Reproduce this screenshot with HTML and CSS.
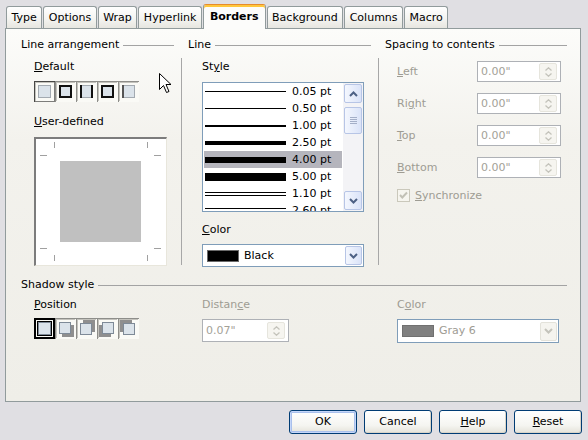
FILE: index.html
```html
<!DOCTYPE html>
<html>
<head>
<meta charset="utf-8">
<link rel="stylesheet" href="styles.css">
</head>
<body>
<div class="tabs">
  <div class="tab">Type</div>
  <div class="tab">Options</div>
  <div class="tab">Wrap</div>
  <div class="tab">Hyperlink</div>
  <div class="tab active">Borders</div>
  <div class="tab">Background</div>
  <div class="tab">Columns</div>
  <div class="tab">Macro</div>
</div>

<div class="panel">
  <div class="top">
    <section class="group arr">
      <div class="legend">Line arrangement</div>
      <div class="body">
        <div class="label"><u>D</u>efault</div>
        <div class="presets">
          <svg width="21" height="21" viewBox="0 0 21 21"><rect width="21" height="21" fill="#fafaf6"/><path d="M0 0H21V1H1V21H0Z" fill="#8e8e8a"/><path d="M1 1H20V2H2V20H1Z" fill="#c4c3bd"/><rect x="4" y="4" width="13" height="13" fill="#dbe3ea"/><rect x="4.5" y="4.5" width="12" height="12" fill="none" stroke="#a3aab1"/><rect x="0.5" y="0.5" width="20" height="20" fill="none" stroke="#000" stroke-dasharray="1 1"/></svg>
          <svg width="21" height="21" viewBox="0 0 21 21"><rect width="21" height="21" fill="#fafaf6"/><path d="M0 0H21V1H1V21H0Z" fill="#8e8e8a"/><path d="M1 1H20V2H2V20H1Z" fill="#c4c3bd"/><rect x="4" y="4" width="13" height="13" fill="#dbe3ea"/><rect x="5" y="5" width="11" height="11" fill="none" stroke="#111" stroke-width="2"/></svg>
          <svg width="21" height="21" viewBox="0 0 21 21"><rect width="21" height="21" fill="#fafaf6"/><path d="M0 0H21V1H1V21H0Z" fill="#8e8e8a"/><path d="M1 1H20V2H2V20H1Z" fill="#c4c3bd"/><rect x="4" y="4" width="13" height="13" fill="#dbe3ea"/><rect x="4.5" y="4.5" width="12" height="12" fill="none" stroke="#a3aab1"/><rect x="4" y="4" width="2" height="13" fill="#111"/><rect x="15" y="4" width="2" height="13" fill="#111"/></svg>
          <svg width="21" height="21" viewBox="0 0 21 21"><rect width="21" height="21" fill="#fafaf6"/><path d="M0 0H21V1H1V21H0Z" fill="#8e8e8a"/><path d="M1 1H20V2H2V20H1Z" fill="#c4c3bd"/><rect x="4" y="4" width="13" height="13" fill="#dbe3ea"/><rect x="5" y="5" width="11" height="11" fill="none" stroke="#111" stroke-width="2"/></svg>
          <svg width="21" height="21" viewBox="0 0 21 21"><rect width="21" height="21" fill="#fafaf6"/><path d="M0 0H21V1H1V21H0Z" fill="#8e8e8a"/><path d="M1 1H20V2H2V20H1Z" fill="#c4c3bd"/><rect x="4" y="4" width="13" height="13" fill="#dbe3ea"/><rect x="4.5" y="4.5" width="12" height="12" fill="none" stroke="#a3aab1"/><rect x="4" y="4" width="2" height="13" fill="#555"/></svg>
        </div>
        <div class="label ud"><u>U</u>ser-defined</div>
        <div class="preview">
          <svg width="131" height="126" viewBox="0 0 131 126">
            <rect x="24" y="22" width="81" height="81" fill="#c0c0c0"/>
            <g stroke="#a0a0a0" stroke-width="1">
              <path d="M18.5 3V9M111.5 3V9M18.5 116V122M111.5 116V122"/>
              <path d="M4 16.5H11M118 16.5H125M4 109.5H11M118 109.5H125"/>
            </g>
          </svg>
        </div>
      </div>
    </section>

    <section class="group line">
      <div class="legend">Line</div>
      <div class="body sep">
        <div class="label">St<u>y</u>le</div>
        <div class="listbox">
          <div class="items">
            <div class="item"><span class="sample w1"></span><span>0.05 pt</span></div>
            <div class="item"><span class="sample w1"></span><span>0.50 pt</span></div>
            <div class="item"><span class="sample w2"></span><span>1.00 pt</span></div>
            <div class="item"><span class="sample w4"></span><span>2.50 pt</span></div>
            <div class="item sel"><span class="sample w6"></span><span>4.00 pt</span></div>
            <div class="item"><span class="sample w8"></span><span>5.00 pt</span></div>
            <div class="item"><span class="sample d1"></span><span>1.10 pt</span></div>
            <div class="item"><span class="sample d2"></span><span>2.60 pt</span></div>
          </div>
          <div class="vscroll">
            <div class="sbtn"><svg width="9" height="6" viewBox="0 0 9 6"><path d="M1 5L4.5 1.5L8 5" fill="none" stroke="#4d6185" stroke-width="2"/></svg></div>
            <div class="sbtn thumb"><svg width="7" height="7" viewBox="0 0 7 7"><path d="M0 0.5H7M0 2.5H7M0 4.5H7M0 6.5H7" stroke="#a4afc8"/></svg></div>
            <div class="sbtn down"><svg width="9" height="6" viewBox="0 0 9 6"><path d="M1 1L4.5 4.5L8 1" fill="none" stroke="#4d6185" stroke-width="2"/></svg></div>
          </div>
        </div>
        <div class="label gap"><u>C</u>olor</div>
        <div class="dropdown">
          <span class="swatch black"></span>
          <span>Black</span>
          <span class="ddbtn"><svg width="9" height="6" viewBox="0 0 9 6"><path d="M1 1L4.5 4.5L8 1" fill="none" stroke="#4d6185" stroke-width="2"/></svg></span>
        </div>
      </div>
    </section>

    <section class="group spacing">
      <div class="legend">Spacing to contents</div>
      <div class="body sep">
        <div class="spin-row"><span class="dim"><u>L</u>eft</span><div class="spin"><span>0.00"</span><span class="spinbtn"><svg width="7" height="4" viewBox="0 0 7 4"><path d="M0.5 3.5L3.5 0.8L6.5 3.5" fill="none" stroke="#c4c3bb" stroke-width="1.3"/></svg><svg width="7" height="4" viewBox="0 0 7 4"><path d="M0.5 0.5L3.5 3.2L6.5 0.5" fill="none" stroke="#c4c3bb" stroke-width="1.3"/></svg></span></div></div>
        <div class="spin-row"><span class="dim">Ri<u>g</u>ht</span><div class="spin"><span>0.00"</span><span class="spinbtn"><svg width="7" height="4" viewBox="0 0 7 4"><path d="M0.5 3.5L3.5 0.8L6.5 3.5" fill="none" stroke="#c4c3bb" stroke-width="1.3"/></svg><svg width="7" height="4" viewBox="0 0 7 4"><path d="M0.5 0.5L3.5 3.2L6.5 0.5" fill="none" stroke="#c4c3bb" stroke-width="1.3"/></svg></span></div></div>
        <div class="spin-row"><span class="dim"><u>T</u>op</span><div class="spin"><span>0.00"</span><span class="spinbtn"><svg width="7" height="4" viewBox="0 0 7 4"><path d="M0.5 3.5L3.5 0.8L6.5 3.5" fill="none" stroke="#c4c3bb" stroke-width="1.3"/></svg><svg width="7" height="4" viewBox="0 0 7 4"><path d="M0.5 0.5L3.5 3.2L6.5 0.5" fill="none" stroke="#c4c3bb" stroke-width="1.3"/></svg></span></div></div>
        <div class="spin-row"><span class="dim"><u>B</u>ottom</span><div class="spin"><span>0.00"</span><span class="spinbtn"><svg width="7" height="4" viewBox="0 0 7 4"><path d="M0.5 3.5L3.5 0.8L6.5 3.5" fill="none" stroke="#c4c3bb" stroke-width="1.3"/></svg><svg width="7" height="4" viewBox="0 0 7 4"><path d="M0.5 0.5L3.5 3.2L6.5 0.5" fill="none" stroke="#c4c3bb" stroke-width="1.3"/></svg></span></div></div>
        <div class="check">
          <span class="cbox"><svg width="11" height="11" viewBox="0 0 11 11"><path d="M2 5L4.3 7.5L9 2.5" fill="none" stroke="#c2c1b6" stroke-width="2"/></svg></span>
          <span class="dim"><u>S</u>ynchronize</span>
        </div>
      </div>
    </section>
  </div>

  <section class="shadow">
    <div class="legend">Shadow style</div>
    <div class="shadow-body">
      <div class="fcol">
        <div class="label"><u>P</u>osition</div>
        <div class="presets pos">
          <svg width="21" height="21" viewBox="0 0 21 21"><rect width="21" height="21" fill="#fafaf6"/><rect x="4.5" y="4.5" width="12" height="12" fill="#dbe3ea" stroke="#7e8a97"/><rect x="1" y="1" width="19" height="19" fill="none" stroke="#000" stroke-width="2"/><rect x="3.5" y="3.5" width="14" height="14" fill="none" stroke="#000"/></svg>
          <svg width="21" height="21" viewBox="0 0 21 21"><rect width="21" height="21" fill="#fafaf6"/><path d="M0 0H21V1H1V21H0Z" fill="#8e8e8a"/><path d="M1 1H20V2H2V20H1Z" fill="#c4c3bd"/><rect x="7" y="7" width="12" height="12" fill="#8f8f8f"/><rect x="4.5" y="4.5" width="11" height="11" fill="#dbe3ea" stroke="#7e8a97"/></svg>
          <svg width="21" height="21" viewBox="0 0 21 21"><rect width="21" height="21" fill="#fafaf6"/><path d="M0 0H21V1H1V21H0Z" fill="#8e8e8a"/><path d="M1 1H20V2H2V20H1Z" fill="#c4c3bd"/><rect x="7" y="2" width="12" height="12" fill="#8f8f8f"/><rect x="4.5" y="5.5" width="11" height="11" fill="#dbe3ea" stroke="#7e8a97"/></svg>
          <svg width="21" height="21" viewBox="0 0 21 21"><rect width="21" height="21" fill="#fafaf6"/><path d="M0 0H21V1H1V21H0Z" fill="#8e8e8a"/><path d="M1 1H20V2H2V20H1Z" fill="#c4c3bd"/><rect x="2" y="7" width="12" height="12" fill="#8f8f8f"/><rect x="5.5" y="4.5" width="11" height="11" fill="#dbe3ea" stroke="#7e8a97"/></svg>
          <svg width="21" height="21" viewBox="0 0 21 21"><rect width="21" height="21" fill="#fafaf6"/><path d="M0 0H21V1H1V21H0Z" fill="#8e8e8a"/><path d="M1 1H20V2H2V20H1Z" fill="#c4c3bd"/><rect x="2" y="2" width="12" height="12" fill="#8f8f8f"/><rect x="5.5" y="5.5" width="11" height="11" fill="#dbe3ea" stroke="#7e8a97"/></svg>
        </div>
      </div>
      <div class="fcol">
        <div class="label dim">Distan<u>c</u>e</div>
        <div class="spin dist"><span>0.07"</span><span class="spinbtn"><svg width="7" height="4" viewBox="0 0 7 4"><path d="M0.5 3.5L3.5 0.8L6.5 3.5" fill="none" stroke="#c4c3bb" stroke-width="1.3"/></svg><svg width="7" height="4" viewBox="0 0 7 4"><path d="M0.5 0.5L3.5 3.2L6.5 0.5" fill="none" stroke="#c4c3bb" stroke-width="1.3"/></svg></span></div>
      </div>
      <div class="fcol">
        <div class="label dim">C<u>o</u>lor</div>
        <div class="dropdown disabled">
          <span class="swatch gray"></span>
          <span class="dim">Gray 6</span>
          <span class="ddbtn"><svg width="9" height="6" viewBox="0 0 9 6"><path d="M1 1L4.5 4.5L8 1" fill="none" stroke="#c4c3bb" stroke-width="2"/></svg></span>
        </div>
      </div>
    </div>
  </section>
</div>

<div class="buttons">
  <div class="btn default">OK</div>
  <div class="btn">Cancel</div>
  <div class="btn"><span><u>H</u>elp</span></div>
  <div class="btn"><span><u>R</u>eset</span></div>
</div>

<svg class="cursor" width="13" height="21" viewBox="0 0 13 21"><path d="M0.5 0.5V16.5L4.5 12.5L7.5 19.5L10 18.5L7 11.5H12Z" fill="#fff" stroke="#000" stroke-linejoin="miter"/></svg>
</body>
</html>
```

FILE: styles.css
```css
* { box-sizing: border-box; }
html, body { margin: 0; }
body {
  width: 588px;
  height: 440px;
  overflow: hidden;
  position: relative;
  background: #e0dfe3;
  font: 11px/14px "DejaVu Sans", sans-serif;
  color: #000;
}
u { text-decoration: underline; text-underline-offset: 1px; }
svg { display: block; }

/* tabs */
.tabs {
  position: relative;
  z-index: 1;
  display: flex;
  align-items: flex-end;
  gap: 1px;
  height: 28px;
  padding-left: 6px;
}
.tab {
  height: 22px;
  padding: 0 4.5px;
  border: 1px solid #919b9c;
  border-bottom: 0;
  border-radius: 3px 3px 0 0;
  background: linear-gradient(#ffffff, #f4f4f1 55%, #e7e6e0);
  line-height: 21px;
  white-space: nowrap;
}
.tab.active {
  height: 25px;
  margin-bottom: -1px;
  padding: 2px 6px 0;
  border-top-color: #e68b2c;
  box-shadow: inset 0 2px 0 #ffc73c;
  background: #fcfcfb;
  font-weight: bold;
  line-height: 19px;
}

/* panel */
.panel {
  margin-left: 5px;
  width: 576px;
  height: 374px;
  border: 1px solid #919b9c;
  background: linear-gradient(#fcfcfa, #f3f2ed 30%, #efeee8);
  padding: 9px 0 0 8px;
}
.top {
  display: grid;
  grid-template-columns: 167px 197px 196px;
}
.legend {
  display: flex;
  align-items: center;
  gap: 4px;
  height: 14px;
  padding: 0 7px;
  white-space: nowrap;
}
.legend::after {
  content: "";
  flex: 1;
  height: 1px;
  background: #a3a3a3;
}
.body {
  height: 207px;
  margin-top: 6px;
  padding: 2px 0 0 20px;
}
.sep { border-left: 1px solid #a7a7a7; }
.spacing .body { padding: 3px 0 0 18px; }

.label { height: 14px; white-space: nowrap; }
.dim { color: #9e9c93; }

.presets { display: flex; margin-top: 7px; }
.ud { margin-top: 13px; }
.preview {
  margin-top: 8px;
  width: 133px;
  height: 129px;
  background: #fff;
  border-style: solid;
  border-width: 2px 1px 1px 2px;
  border-color: #7c7c7c #e8e6dc #e8e6dc #7c7c7c;
}

/* list box */
.listbox {
  display: flex;
  margin-top: 8px;
  width: 162px;
  height: 130px;
  border: 1px solid #7f9db9;
  background: #fff;
}
.items { flex: 1; padding: 0 1px; overflow: hidden; }
.item {
  display: flex;
  align-items: center;
  gap: 6px;
  height: 17px;
  padding-left: 1px;
  white-space: nowrap;
}
.item.sel { background: #b5b5bd; }
.sample { flex: none; width: 81px; background: #000; }
.w1 { height: 1px; }
.w2 { height: 2px; }
.w4 { height: 4px; }
.w6 { height: 6px; }
.w8 { height: 8px; }
.d1 { height: 4px; background: none; border-top: 1px solid #000; border-bottom: 1px solid #000; }
.d2 { height: 6px; background: none; border-top: 1px solid #000; border-bottom: 2px solid #000; }

.vscroll {
  flex: none;
  width: 20px;
  display: flex;
  flex-direction: column;
  padding: 1px;
  background: #f3f3f6;
}
.sbtn {
  height: 19px;
  display: flex;
  align-items: center;
  justify-content: center;
  border: 1px solid #b7c5e6;
  border-radius: 2px;
  background: linear-gradient(90deg, #f4f7fe, #dae3f8);
}
.sbtn.thumb { height: 27px; margin-top: 4px; }
.sbtn.down { margin-top: auto; }

.gap { margin-top: 11px; }
.dropdown {
  display: flex;
  align-items: center;
  gap: 5px;
  margin-top: 7px;
  width: 162px;
  height: 23px;
  border: 1px solid #7f9db9;
  background: #fff;
  padding: 0 1px 0 4px;
}
.swatch { width: 32px; height: 12px; border: 1px solid #6a6a6a; }
.swatch.black { background: #000; }
.swatch.gray { background: #808080; border-color: #707070; }
.ddbtn {
  margin-left: auto;
  width: 17px;
  height: 19px;
  display: flex;
  align-items: center;
  justify-content: center;
  border: 1px solid #b7c5e6;
  border-radius: 2px;
  background: linear-gradient(90deg, #f4f7fe, #dae3f8);
}
.dropdown.disabled .ddbtn {
  border-color: #e3e2da;
  background: #f5f4ef;
}

/* spin fields */
.spin-row {
  display: grid;
  grid-template-columns: 80px 84px;
  align-items: center;
  height: 21px;
  margin-bottom: 11px;
}
.spin {
  display: flex;
  align-items: center;
  width: 84px;
  height: 21px;
  padding-left: 3px;
  border: 1px solid #aeb1b6;
  background: #fff;
  color: #a3a197;
}
.spinbtn {
  margin: 0 3px 0 auto;
  width: 18px;
  height: 17px;
  display: flex;
  flex-direction: column;
  align-items: center;
  justify-content: center;
  gap: 2px;
  border: 1px solid #e6e5dd;
  border-radius: 2px;
  background: #f6f5f0;
}
.check { display: flex; align-items: center; gap: 5px; height: 13px; }
.cbox {
  width: 13px;
  height: 13px;
  border: 1px solid #cac8bb;
  background: #f6f5ef;
}

/* shadow */
.shadow { margin: 13px 6px 0 0; }
.shadow-body {
  display: grid;
  grid-template-columns: 168px 195px 162px;
  margin-top: 6px;
  padding-left: 20px;
}
.presets.pos { margin-top: 6px; }
.spin.dist { width: 87px; height: 23px; margin-top: 7px; }
.fcol .dropdown { margin-top: 7px; height: 24px; }

/* buttons */
.buttons {
  display: flex;
  justify-content: flex-end;
  gap: 7px;
  padding-right: 6px;
  margin-top: 8px;
}
.btn {
  width: 68px;
  height: 24px;
  display: flex;
  align-items: center;
  justify-content: center;
  border: 1px solid #003c74;
  border-radius: 3px;
  background: linear-gradient(#ffffff, #f5f5f1 65%, #e4e2d9);
  box-shadow: inset -1px -1px 0 #d8d4c8;
}
.btn.default {
  box-shadow: inset 0 0 0 1px #c5d6f9, inset 0 0 0 2px #a9c0ec;
}

.cursor { position: absolute; left: 159px; top: 73px; }
```
